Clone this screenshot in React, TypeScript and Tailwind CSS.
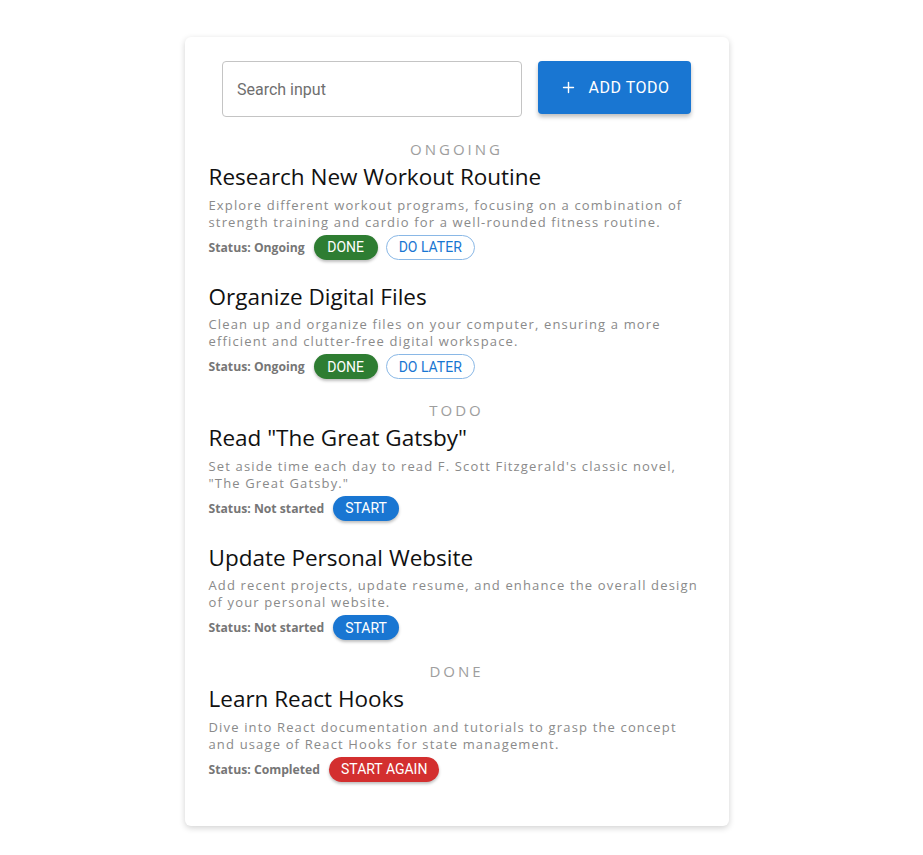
import { Plus } from "lucide-react";

type Todo = {
  title: string;
  description: string;
  status: string;
  kind: "ongoing" | "todo" | "done";
};

const SECTIONS: { label: string; items: Todo[] }[] = [
  {
    label: "ONGOING",
    items: [
      {
        title: "Research New Workout Routine",
        description:
          "Explore different workout programs, focusing on a combination of strength training and cardio for a well-rounded fitness routine.",
        status: "Ongoing",
        kind: "ongoing",
      },
      {
        title: "Organize Digital Files",
        description:
          "Clean up and organize files on your computer, ensuring a more efficient and clutter-free digital workspace.",
        status: "Ongoing",
        kind: "ongoing",
      },
    ],
  },
  {
    label: "TODO",
    items: [
      {
        title: 'Read "The Great Gatsby"',
        description:
          'Set aside time each day to read F. Scott Fitzgerald\'s classic novel, "The Great Gatsby."',
        status: "Not started",
        kind: "todo",
      },
      {
        title: "Update Personal Website",
        description:
          "Add recent projects, update resume, and enhance the overall design of your personal website.",
        status: "Not started",
        kind: "todo",
      },
    ],
  },
  {
    label: "DONE",
    items: [
      {
        title: "Learn React Hooks",
        description:
          "Dive into React documentation and tutorials to grasp the concept and usage of React Hooks for state management.",
        status: "Completed",
        kind: "done",
      },
    ],
  },
];

const pill =
  "h-[25px] min-w-[64px] rounded-full px-3 text-[14px] leading-none font-['Roboto',sans-serif] uppercase flex items-center justify-center";

function Actions({ kind }: { kind: Todo["kind"] }) {
  if (kind === "ongoing") {
    return (
      <>
        <button className={`${pill} bg-[#2e7d32] text-white shadow-[0_2px_3px_rgba(0,0,0,0.25)]`}>
          Done
        </button>
        <button className={`${pill} border border-[#8ab8e6] text-[#1976d2]`}>
          Do later
        </button>
      </>
    );
  }
  if (kind === "todo") {
    return (
      <button className={`${pill} bg-[#1976d2] text-white shadow-[0_2px_3px_rgba(0,0,0,0.25)]`}>
        Start
      </button>
    );
  }
  return (
    <button className={`${pill} bg-[#d32f2f] text-white shadow-[0_2px_3px_rgba(0,0,0,0.25)]`}>
      Start again
    </button>
  );
}

function TodoItem({ todo }: { todo: Todo }) {
  return (
    <div className="mb-[21px]">
      <h2 className="text-[22.5px] leading-[32px] text-[#111]">{todo.title}</h2>
      <p className="mt-[3.5px] text-[13px] leading-[17px] tracking-[1.15px] text-[#8a8a8a]">
        {todo.description}
      </p>
      <div className="mt-[4px] h-[25px] flex items-center gap-[8px]">
        <span className="pt-[2px] text-[12.2px] font-bold text-[#767676] mr-[1px]">
          Status: {todo.status}
        </span>
        <Actions kind={todo.kind} />
      </div>
    </div>
  );
}

export default function App() {
  return (
    <div className="min-h-screen bg-white pt-[37px] font-['Segoe_UI','Open_Sans',sans-serif]">
      <div className="relative left-[-5px] mx-auto w-[544px] rounded-md bg-white px-6 pt-6 pb-[23px] shadow-[0_2px_6px_rgba(0,0,0,0.18)]">
        {/* Search + add */}
        <div className="flex justify-center gap-[16px] mb-[22px]">
          <input
            placeholder="Search input"
            className="w-[300px] h-[56px] rounded border border-[#c4c4c4] px-[14px] text-[16px] font-['Roboto',sans-serif] placeholder:text-[#6f6f6f] outline-none"
          />
          <button className="w-[153px] h-[53px] rounded bg-[#1976d2] text-white flex items-center justify-center gap-3 text-[16px] tracking-[0.5px] font-['Roboto',sans-serif] shadow-[0_3px_4px_rgba(0,0,0,0.25)]">
            <Plus size={17} strokeWidth={2} />
            ADD TODO
          </button>
        </div>

        {SECTIONS.map((section) => (
          <div key={section.label}>
            <div className="h-[20px] leading-[20px] mb-[2px] text-center text-[15px] tracking-[3px] text-[#9e9e9e]">
              {section.label}
            </div>
            {section.items.map((t) => (
              <TodoItem key={t.title} todo={t} />
            ))}
          </div>
        ))}
      </div>
    </div>
  );
}
